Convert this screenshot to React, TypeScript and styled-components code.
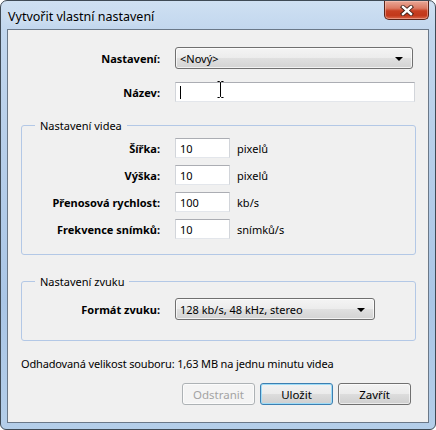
import styled, { createGlobalStyle } from "styled-components";

const GlobalStyle = createGlobalStyle`
  html, body {
    margin: 0;
    padding: 0;
  }
  body {
    width: 436px;
    height: 430px;
    overflow: hidden;
    background: #ffffff;
    font-family: "Noto Sans", "Open Sans", sans-serif;
    font-size: 11px;
    color: #000;
  }
`;

const Window = styled.div`
  box-sizing: border-box;
  width: 436px;
  height: 430px;
  border: 1px solid #3f4a55;
  border-radius: 7px 7px 6px 6px;
  background: linear-gradient(
    180deg,
    #cfe0f2 0px,
    #c2d7ee 28px,
    #b9d0ea 120px,
    #aac6e6 300px,
    #b4cee9 430px
  );
  display: flex;
  flex-direction: column;
  padding: 0 6px 6px 6px;
`;

const TitleBar = styled.div`
  height: 28px;
  display: flex;
  justify-content: space-between;
  align-items: flex-start;
`;

const Title = styled.div`
  padding: 7px 0 0 1px;
  font-size: 12.5px;
  color: #000;
  text-shadow: 0 0 8px rgba(255, 255, 255, 0.9);
`;

const CloseButton = styled.div`
  box-sizing: border-box;
  width: 45px;
  height: 19px;
  border: 1px solid #5a2419;
  border-top: none;
  border-radius: 0 0 5px 5px;
  background: linear-gradient(
    180deg,
    #e9a897 0%,
    #dc7a63 40%,
    #c73f22 55%,
    #c2381b 80%,
    #d9664a 100%
  );
  box-shadow: inset 0 0 0 1px rgba(255, 210, 200, 0.45);
  display: flex;
  align-items: center;
  justify-content: center;
`;

const Client = styled.div`
  flex: 1;
  box-sizing: border-box;
  border: 1px solid #6a7888;
  background: #f0f0f0;
  padding: 17px 12px 0 13px;
  display: flex;
  flex-direction: column;
`;

const Row = styled.div<{ $labelWidth: number; $top?: number }>`
  display: grid;
  grid-template-columns: ${(p) => p.$labelWidth}px auto 1fr;
  align-items: center;
  margin-top: ${(p) => p.$top ?? 0}px;
`;

const Label = styled.div`
  font-weight: bold;
  text-align: right;
  padding-right: 15px;
  white-space: nowrap;
`;

const Combo = styled.div<{ $width: number }>`
  box-sizing: border-box;
  position: relative;
  width: ${(p) => p.$width}px;
  height: 22px;
  border: 1px solid #707070;
  border-radius: 3px;
  background: linear-gradient(
    180deg,
    #f4f4f4 0%,
    #ececec 50%,
    #e0e0e0 51%,
    #d3d3d3 100%
  );
  box-shadow: inset 0 0 0 1px rgba(255, 255, 255, 0.7);
  display: flex;
  align-items: center;
  padding: 0 9px 0 4px;
  justify-content: space-between;
  white-space: nowrap;
  color: #000;
`;

const Arrow = styled.span`
  width: 0;
  height: 0;
  border-left: 4px solid transparent;
  border-right: 4px solid transparent;
  border-top: 4px solid #000;
  margin-top: 1px;
`;

const TextBox = styled.div<{ $width: number }>`
  box-sizing: border-box;
  position: relative;
  width: ${(p) => p.$width}px;
  height: 20px;
  border: 1px solid;
  border-color: #abadb3 #d2d5da #e3e6eb #d2d5da;
  background: #fff;
  display: flex;
  align-items: center;
  padding-left: 4px;
  color: #000;
`;

const Caret = styled.span`
  width: 1px;
  height: 13px;
  background: #000;
`;

const IBeam = styled.svg`
  position: absolute;
  left: 41px;
  top: -2px;
`;

const Unit = styled.div`
  padding-left: 7px;
  white-space: nowrap;
`;

const Group = styled.fieldset<{ $top: number; $bottom: number }>`
  margin: ${(p) => p.$top}px 0 0 0;
  padding: 0 0 ${(p) => p.$bottom}px 0;
  min-inline-size: 0;
  border: 1px solid #b3c8e6;
  border-radius: 3px;
  width: 395px;
  box-sizing: border-box;
`;

const Legend = styled.legend`
  margin-left: 13px;
  padding: 0 5px;
  color: #000;
`;

const GroupRows = styled.div<{ $top: number; $gap: number }>`
  display: flex;
  flex-direction: column;
  gap: ${(p) => p.$gap}px;
  padding-top: ${(p) => p.$top}px;
`;

const Estimate = styled.div`
  margin-top: 15px;
  color: #000;
  letter-spacing: -0.15px;
`;

const Buttons = styled.div`
  display: flex;
  justify-content: flex-end;
  gap: 5px;
  margin-top: 12px;
  padding-right: 5px;
`;

const Button = styled.div<{ $variant?: "default" | "disabled" }>`
  box-sizing: border-box;
  width: 73px;
  height: 22px;
  border-radius: 3px;
  border: 1px solid
    ${(p) =>
      p.$variant === "default"
        ? "#3c7fb1"
        : p.$variant === "disabled"
        ? "#adb2b5"
        : "#707070"};
  background: ${(p) =>
    p.$variant === "disabled"
      ? "#f4f4f4"
      : "linear-gradient(180deg, #f2f2f2 0%, #ebebeb 50%, #dddddd 51%, #cfcfcf 100%)"};
  box-shadow: ${(p) =>
    p.$variant === "default"
      ? "inset 0 0 0 1px #9fdcf7"
      : "inset 0 0 0 1px rgba(255,255,255,0.6)"};
  color: ${(p) => (p.$variant === "disabled" ? "#a3a3a3" : "#000")};
  font-size: 11.5px;
  display: flex;
  align-items: center;
  justify-content: center;
`;

const CloseGlyph = () => (
  <svg width="14" height="11" viewBox="0 0 14 11">
    <path
      d="M3 2 L11 9 M11 2 L3 9"
      stroke="#3a1c15"
      strokeWidth="4.2"
      strokeLinecap="square"
    />
    <path
      d="M3 2 L11 9 M11 2 L3 9"
      stroke="#ffffff"
      strokeWidth="2.4"
      strokeLinecap="square"
    />
  </svg>
);

const videoRows = [
  { label: "Šířka:", value: "10", unit: "pixelů" },
  { label: "Výška:", value: "10", unit: "pixelů" },
  { label: "Přenosová rychlost:", value: "100", unit: "kb/s" },
  { label: "Frekvence snímků:", value: "10", unit: "snímků/s" },
];

const App = () => {
  return (
    <>
      <GlobalStyle />
      <Window>
        <TitleBar>
          <Title>Vytvořit vlastní nastavení</Title>
          <CloseButton>
            <CloseGlyph />
          </CloseButton>
        </TitleBar>
        <Client>
          <Row $labelWidth={154}>
            <Label>Nastavení:</Label>
            <Combo $width={238}>
              <span>&lt;Nový&gt;</span>
              <Arrow />
            </Combo>
          </Row>
          <Row $labelWidth={154} $top={13}>
            <Label>Název:</Label>
            <TextBox $width={240}>
              <Caret />
              <IBeam width="7" height="17" viewBox="0 0 7 17">
                <path
                  d="M0.5 0.5 H2.5 L3.5 1.5 L4.5 0.5 H6.5 M3.5 1.5 V15.5 M0.5 16.5 H2.5 L3.5 15.5 L4.5 16.5 H6.5"
                  stroke="#000"
                  strokeWidth="1"
                  fill="none"
                />
              </IBeam>
            </TextBox>
          </Row>

          <Group $top={16} $bottom={15}>
            <Legend>Nastavení videa</Legend>
            <GroupRows $top={5} $gap={7}>
              {videoRows.map((r) => (
                <Row key={r.label} $labelWidth={153}>
                  <Label>{r.label}</Label>
                  <TextBox $width={55}>{r.value}</TextBox>
                  <Unit>{r.unit}</Unit>
                </Row>
              ))}
            </GroupRows>
          </Group>

          <Group $top={19} $bottom={20}>
            <Legend>Nastavení zvuku</Legend>
            <GroupRows $top={9} $gap={0}>
              <Row $labelWidth={153}>
                <Label>Formát zvuku:</Label>
                <Combo $width={200}>
                  <span>128 kb/s, 48 kHz, stereo</span>
                  <Arrow />
                </Combo>
              </Row>
            </GroupRows>
          </Group>

          <Estimate>
            Odhadovaná velikost souboru: 1,63 MB na jednu minutu videa
          </Estimate>

          <Buttons>
            <Button $variant="disabled">Odstranit</Button>
            <Button $variant="default">Uložit</Button>
            <Button>Zavřít</Button>
          </Buttons>
        </Client>
      </Window>
    </>
  );
};

export default App;
